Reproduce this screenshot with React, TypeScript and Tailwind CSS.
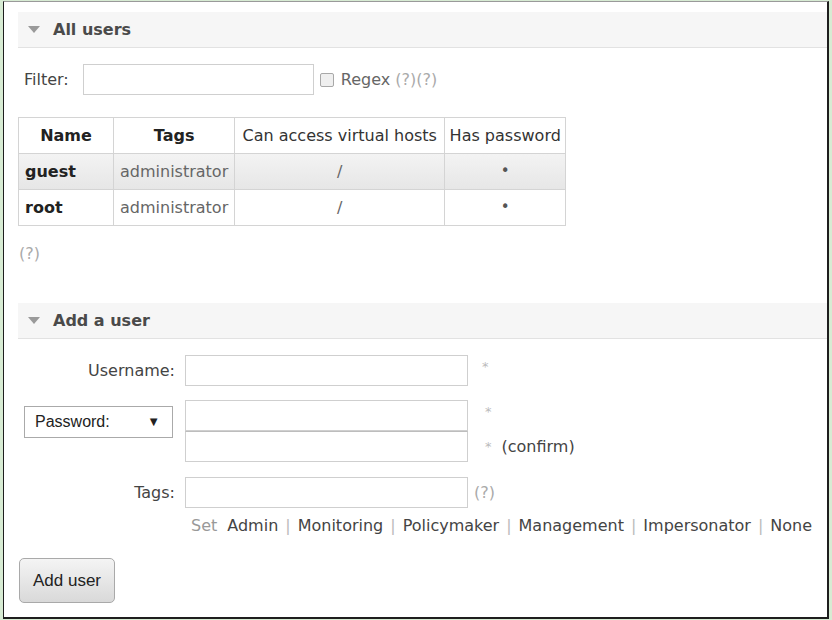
const USERS = [
  { name: "guest", tags: "administrator", vhosts: "/", shaded: true },
  { name: "root", tags: "administrator", vhosts: "/", shaded: false },
];

const TAG_LINKS = ["Admin", "Monitoring", "Policymaker", "Management", "Impersonator", "None"];

function SectionHeader({ title }: { title: string }) {
  return (
    <div className="flex h-[36px] items-center border-b border-[#e2e2e2] bg-[#f6f6f6] pl-[10px]">
      <svg width="12" height="8" viewBox="0 0 12 8" className="mr-[13px]">
        <polygon points="0,0 12,0 6,7" fill="#9a9a9a" />
      </svg>
      <span className="text-[16px] font-bold text-[#4a4a4a]">{title}</span>
    </div>
  );
}

function TextInput({ className = "" }: { className?: string }) {
  return <div className={`h-[31px] w-[283px] border border-[#cfcfcf] bg-white ${className}`} />;
}

export default function App() {
  return (
    <div className="h-[620px] w-[832px] bg-[#d7ebd3] pl-[3px] pt-[1px] font-['DejaVu_Sans',sans-serif] text-[16px] text-[#333]">
      <div className="h-[618px] w-[826px] border-b-2 border-l border-r-2 border-t border-[#1e1e1e] border-t-[#9a9a9a] bg-white pl-[14px] pt-[10px]">
        <SectionHeader title="All users" />

        {/* filter row */}
        <div className="mt-[16px] flex items-center pl-[6px]">
          <span className="text-[#444]">Filter:</span>
          <div className="ml-[14px] h-[31px] w-[231px] border border-[#cfcfcf] bg-white" />
          <div className="ml-[6px] h-[14px] w-[14px] rounded-[2px] border border-[#a8a8a8] bg-[#efefef]" />
          <span className="ml-[7px] text-[#666]">Regex</span>
          <span className="ml-[5px] text-[#aaa]">(?)(?)</span>
        </div>

        {/* users table */}
        <table className="mt-[22px] border-collapse text-[16px]">
          <thead>
            <tr className="h-[36px]">
              <th className="w-[95px] border border-[#d4d4d4] font-bold text-[#222]">Name</th>
              <th className="w-[121px] border border-[#d4d4d4] font-bold text-[#222]">Tags</th>
              <th className="w-[210px] whitespace-nowrap border border-[#d4d4d4] px-[6px] font-normal text-[#333]">Can access virtual hosts</th>
              <th className="w-[121px] whitespace-nowrap border border-[#d4d4d4] px-[4px] font-normal text-[#333]">Has password</th>
            </tr>
          </thead>
          <tbody>
            {USERS.map((u) => (
              <tr
                key={u.name}
                className={`h-[36px] ${u.shaded ? "bg-[linear-gradient(#f3f3f3,#e6e6e6)]" : "bg-white"}`}
              >
                <td className="border border-[#d4d4d4] pl-[6px] font-bold text-[#222]">{u.name}</td>
                <td className="border border-[#d4d4d4] px-[6px] text-[#666]">{u.tags}</td>
                <td className="border border-[#d4d4d4] text-center text-[#666]">{u.vhosts}</td>
                <td className="border border-[#d4d4d4] text-center text-[15px] text-[#555]">•</td>
              </tr>
            ))}
          </tbody>
        </table>

        <div className="mt-[18px] h-[20px] pl-[1px] leading-[20px] text-[#aaa]">(?)</div>

        <div className="mt-[39px]">
          <SectionHeader title="Add a user" />
        </div>

        {/* add user form */}
        <div className="mt-[16px] flex items-center">
          <span className="w-[157px] text-right text-[#444]">Username:</span>
          <TextInput className="ml-[10px]" />
          <span className="ml-[14px] -mt-[8px] text-[13px] text-[#bbb]">*</span>
        </div>

        <div className="mt-[14px] flex items-start">
          <div className="ml-[6px] mt-[6px] flex h-[32px] w-[149px] items-center justify-between border border-[#aaa] bg-white pl-[10px] pr-[12px] font-['Liberation_Sans',sans-serif] text-[16px] text-[#222]">
            <span>Password:</span>
            <span className="text-[13px]">▼</span>
          </div>
          <div className="ml-[12px] flex flex-col">
            <div className="flex items-center">
              <TextInput />
              <span className="ml-[17px] -mt-[8px] text-[13px] text-[#bbb]">*</span>
            </div>
            <div className="flex items-center">
              <TextInput className="border-t-[#bdbdbd]" />
              <span className="ml-[17px] text-[13px] text-[#bbb]">*</span>
              <span className="ml-[10px] text-[#444]">(confirm)</span>
            </div>
          </div>
        </div>

        <div className="mt-[15px] flex items-center">
          <span className="w-[157px] text-right text-[#444]">Tags:</span>
          <TextInput className="ml-[10px]" />
          <span className="ml-[6px] text-[#aaa]">(?)</span>
        </div>

        <div className="mt-[8px] flex h-[20px] items-center whitespace-nowrap pl-[173px] leading-[20px]">
          <span className="mr-[10px] text-[#999]">Set</span>
          {TAG_LINKS.map((t, i) => (
            <span key={t} className="flex items-center">
              {i > 0 && <span className="mx-[7px] text-[#bbb]">|</span>}
              <span className="text-[#444]">{t}</span>
            </span>
          ))}
        </div>

        <button className="ml-[1px] mt-[22px] h-[45px] w-[96px] rounded-[5px] border border-[#a9a9a9] bg-[linear-gradient(#f4f4f4,#d9d9d9)] font-['Liberation_Sans',sans-serif] text-[17px] text-[#222]">
          Add user
        </button>
      </div>
    </div>
  );
}
